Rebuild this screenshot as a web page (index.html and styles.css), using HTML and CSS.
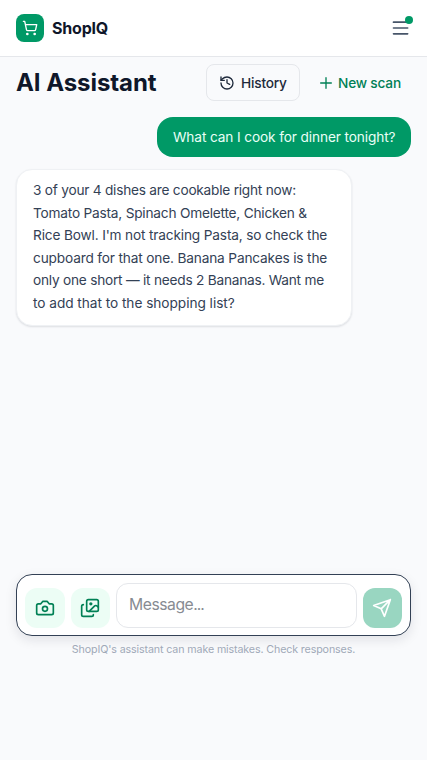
FILE: index.html
```html
<!DOCTYPE html>
<html lang="en">
<head>
<meta charset="utf-8">
<meta name="viewport" content="width=device-width, initial-scale=1">
<title>ShopIQ</title>
<link rel="stylesheet" href="styles.css">
</head>
<body>
<header class="topbar">
  <div class="brand">
    <span class="logo"><svg class="icon" width="16" height="16" viewBox="0 0 24 24"><circle cx="8" cy="21" r="1"/><circle cx="19" cy="21" r="1"/><path d="M2.05 2.05h2l2.66 12.42a2 2 0 0 0 2 1.58h9.78a2 2 0 0 0 1.95-1.57l1.65-7.43H5.12"/></svg></span>
    <span class="brand-name">ShopIQ</span>
  </div>
  <button class="menu" aria-label="Menu"><svg class="icon" width="20" height="20" viewBox="0 0 24 24"><path d="M3 5h17M3 12h17M3 19h17"/></svg><span class="dot"></span></button>
</header>
<main class="page">
  <div class="heading">
    <h1>AI Assistant</h1>
    <div class="actions">
      <button class="btn history"><svg class="icon" width="16" height="16" viewBox="0 0 24 24"><path d="M3 12a9 9 0 1 0 9-9 9.750 9.750 0 0 0-6.740 2.740L3 8"/><path d="M3 3v5h5M12 7v5l4 2"/></svg><span>History</span></button>
      <button class="btn scan"><svg class="icon" width="16" height="16" viewBox="0 0 24 24"><path d="M4 12h16M12 4v16"/></svg><span>New scan</span></button>
    </div>
  </div>
  <section class="chat">
    <p class="bubble user">What can I cook for dinner tonight?</p>
    <p class="bubble reply">
      <span class="line l1">3 of your 4 dishes are cookable right now:</span>
      <span class="line l2">Tomato Pasta, Spinach Omelette, Chicken &amp;</span>
      <span class="line l3">Rice Bowl. I'm not tracking Pasta, so check the</span>
      <span class="line l4">cupboard for that one. Banana Pancakes is the</span>
      <span class="line l5">only one short — it needs 2 Bananas. Want me</span>
      <span class="line l6">to add that to the shopping list?</span>
    </p>
  </section>
  <div class="composer">
    <button class="tool" aria-label="Camera"><svg class="icon" width="20" height="20" viewBox="0 0 24 24"><path d="M14.5 4h-5L7 7H4a2 2 0 0 0-2 2v9a2 2 0 0 0 2 2h16a2 2 0 0 0 2-2V9a2 2 0 0 0-2-2h-3l-2.500-3z"/><circle cx="12" cy="13" r="3"/></svg></button>
    <button class="tool" aria-label="Photos"><svg class="icon" width="20" height="20" viewBox="0 0 24 24"><path d="m22 11-1.296-1.296a2.400 2.400 0 0 0-3.408 0L11 16"/><path d="M4 8a2 2 0 0 0-2 2v10a2 2 0 0 0 2 2h10a2 2 0 0 0 2-2"/><circle cx="13" cy="7" r="1" fill="currentColor"/><rect x="8" y="2" width="14" height="14" rx="2"/></svg></button>
    <div class="field"><span>Message<span class="dots">...</span></span></div>
    <button class="send" aria-label="Send"><svg class="icon" width="20" height="20" viewBox="0 0 24 24"><path d="M22 2 11 13M22 2l-7 20-4-9-9-4z"/></svg></button>
  </div>
  <p class="note">ShopIQ's assistant can make mistakes. Check responses.</p>
</main>
</body>
</html>
```
FILE: styles.css
```css
* { box-sizing: border-box; }
body { margin: 0; height: 760px; display: flex; flex-direction: column; background: #f9fafc; color: #0f172a; font-family: Inter, "Liberation Sans", sans-serif; overflow: hidden; }
button { border: 0; padding: 0; margin: 0; background: none; font: inherit; color: inherit; }
h1, p { margin: 0; }
.icon { display: block; flex: none; fill: none; stroke: currentColor; stroke-width: 2; stroke-linecap: round; stroke-linejoin: round; }
.topbar { height: 56.5px; flex: none; padding: 0 16px; display: flex; align-items: center; justify-content: space-between; background: #fff; border-bottom: 1px solid #e5e7eb; }
.brand { display: flex; align-items: center; gap: 8px; }
.logo { width: 28px; height: 28px; border-radius: 8px; background: #009966; color: #fff; display: grid; place-items: center; }
.brand-name { font-size: 16px; font-weight: 700; letter-spacing: -.2px; }
.menu { position: relative; color: #475569; }
.dot { position: absolute; top: -2px; right: -2px; width: 8px; height: 8px; border-radius: 50%; background: #009966; }
.page { flex: 1; padding: 7.5px 16px 0; display: flex; flex-direction: column; }
.heading { height: 37px; display: flex; align-items: center; justify-content: space-between; white-space: nowrap; }
h1 { font-size: 24px; line-height: 32px; font-weight: 700; letter-spacing: -.07px; }
.actions { display: flex; gap: 8px; }
.btn { height: 37px; display: flex; align-items: center; gap: 6px; font-size: 13.7px; font-weight: 500; letter-spacing: -.2px; }
.history { width: 94px; padding-left: 12px; border: 1px solid #e5e7eb; border-radius: 8px; color: #1e293b; }
.scan { width: 103px; padding-left: 10px; gap: 4px; color: #008055; }
.chat { height: 457px; padding-top: 16px; display: flex; flex-direction: column; gap: 12px; }
.bubble { font-size: 13.7px; line-height: 22.6px; border-radius: 16px; white-space: nowrap; }
.user { align-self: flex-end; width: 254px; height: 39.5px; padding: 9px 0 0 16px; background: #009966; color: #e9fff6; letter-spacing: -.13px; }
.reply { width: 336px; height: 157px; padding: 9.6px 16px; background: #fff; border: 1px solid #eff1f4; color: #334155; box-shadow: 0 1px 2px rgba(15, 23, 42, .12); }
.line { display: block; }
.l1 { letter-spacing: -.24px; }
.l2 { letter-spacing: -.22px; }
.l3 { letter-spacing: -.17px; }
.l4 { letter-spacing: -.17px; }
.l5 { letter-spacing: -.24px; }
.l6 { letter-spacing: -.05px; }
.composer { height: 62px; margin-top: 16px; padding: 8px 8px 7.5px; display: flex; align-items: flex-end; gap: 6px; background: #fff; border: 1px solid #334155; border-radius: 16px; box-shadow: 0 4px 12px rgba(15, 23, 42, .1); }
.tool, .send { width: 39.5px; height: 39.5px; flex: none; border-radius: 12px; display: grid; place-items: center; }
.tool { background: #ecfdf5; color: #008055; }
.send { background: #99d6c1; color: #fff; }
.field { flex: 1; height: 44.5px; border: 1px solid #e5e7eb; border-radius: 12px; padding: 9px 12px; font-size: 15.7px; line-height: 24px; letter-spacing: -.45px; color: #878b92; }
.dots { letter-spacing: -1.1px; }
.note { margin-top: 6px; text-align: center; font-size: 10.7px; line-height: 16px; letter-spacing: -.13px; color: #a0a9b8; white-space: nowrap; }
```
